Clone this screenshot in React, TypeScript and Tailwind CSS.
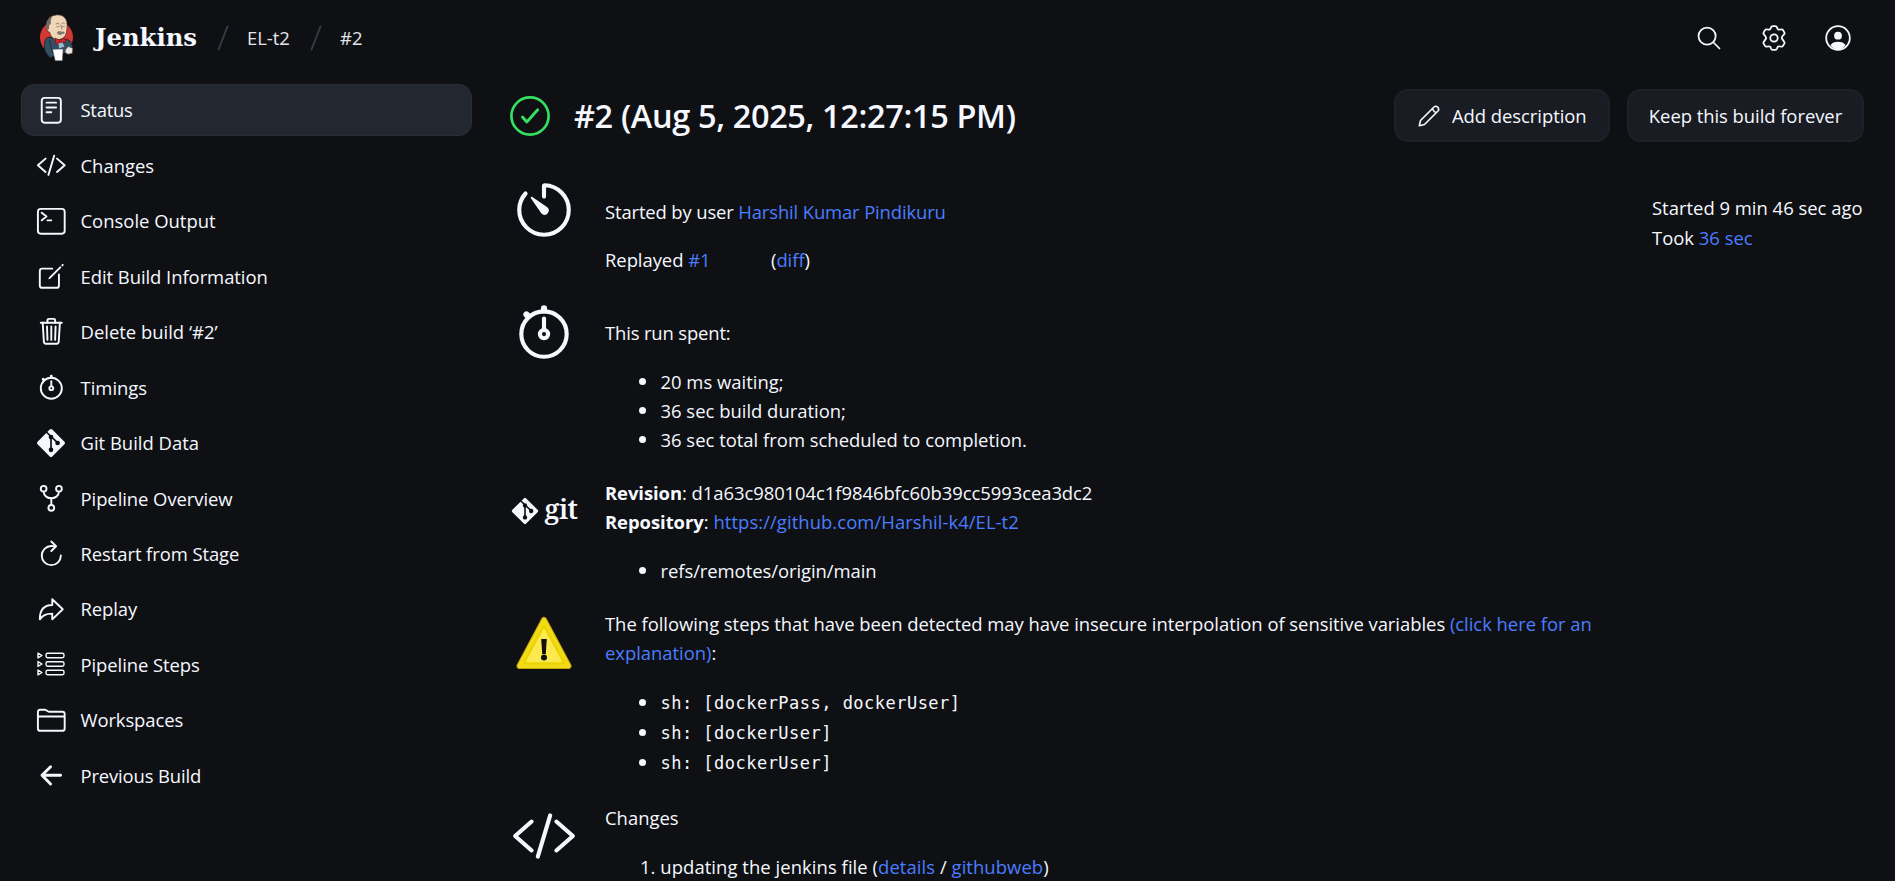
import type { ReactNode } from "react";
import type { IconType } from "react-icons";
import {
  IoArrowBackOutline,
  IoArrowRedoOutline,
  IoCodeSlashOutline,
  IoCreateOutline,
  IoFolderOutline,
  IoGitNetworkOutline,
  IoReaderOutline,
  IoRefreshOutline,
  IoSearchOutline,
  IoStopwatchOutline,
  IoTerminalOutline,
  IoTimerOutline,
  IoTrashOutline,
} from "react-icons/io5";

function JenkinsLogo() {
  return (
    <svg viewBox="24 24 112 144" className="h-12 w-[37px] shrink-0">
      <circle cx="80" cy="94" r="50" fill="#d33833" />
      <path d="M46 138c-4-20-4-38 8-44l22 2 24 4c12 0 20 2 24 10l6 14-14 2-8 14-26 8-22 8z" fill="#335061" stroke="#14202a" strokeWidth="2.5" />
      <path d="M58 102l10 40" stroke="#14202a" strokeWidth="2" fill="none" />
      <path d="M51 64c-2-20 8-36 28-38 20-1 32 9 33 28 0 12 0 24-5 34-5 10-20 16-30 12-9-3-15-10-18-22-5 1-8-5-8-14z" fill="#f0d6b7" stroke="#3b2f28" strokeWidth="2" />
      <path d="M49 66c-3-16 4-32 20-38-6 8-7 16-6 26l-5 2-1 14c-5 1-7 0-8-4z" fill="#70675f" />
      <path d="M78 54q6-5 11 0M96 52q5-4 9 1M80 61q5 3 9 0M97 60q4 3 8 0M93 56l4 14" stroke="#5a473b" strokeWidth="1.8" fill="none" />
      <path d="M81 80c4-7 11-6 14-3 6-2 10 1 10 4-3 4-4 3-8 3-5 5-13 3-16-4z" fill="#80796f" />
      <path d="M76 96l14 7 14-7 5 14-16-2-15 8z" fill="#d8232a" stroke="#5a1111" strokeWidth="1.5" />
      <path d="M86 112l12-2 6 12-16 6z" fill="#9fb9d0" />
      <path d="M68 130l32-1-2 36H76z" fill="#fff" stroke="#33383d" strokeWidth="1.5" />
      <path d="M108 130l8-8 13 5-1 15-13 3-9-5z" fill="#e9e4dc" stroke="#4b4b4b" strokeWidth="1.6" />
    </svg>
  );
}

function SettingsIcon() {
  return (
    <svg viewBox="0 0 28 28" className="size-7" fill="none" stroke="currentColor" strokeWidth="1.8" strokeLinejoin="round">
      <path d="M11 3.600Q11.400 2.200 12.800 2.200h2.400Q16.600 2.200 17 3.600q.700 2.700 3.400 1.900 1.900-.600 2.600.600l1.300 2.300q.700 1.200-.400 2.200-2.600 2.400-2.100 3.400.1.700 2.100 3.400 1.100 1 .4 2.200l-1.300 2.300q-.7 1.200-2.600.6Q17.700 21.700 17 24.400q-.4 1.400-1.800 1.400h-2.400q-1.400 0-1.800-1.400-.700-2.700-3.400-1.900-1.900.600-2.600-.600l-1.300-2.300q-.700-1.200.400-2.200 2-2.700 2.100-3.400 0-1-2.100-3.400-1.100-1-.4-2.200L5 6.100q.7-1.200 2.600-.600Q10.300 6.300 11 3.600z" />
      <circle cx="14" cy="14" r="3.700" />
    </svg>
  );
}

function PersonIcon() {
  return (
    <svg viewBox="0 0 26 26" className="size-[26px]">
      <circle cx="13" cy="13" r="11.800" fill="none" stroke="currentColor" strokeWidth="1.800" />
      <circle cx="13" cy="10.700" r="3.900" fill="currentColor" />
      <path d="M5.500 20.200c1.200-2.400 4.200-3.500 7.500-3.500s6.300 1.100 7.500 3.500C18.800 23 16 24.600 13 24.600S7.200 23 5.500 20.200z" fill="currentColor" />
    </svg>
  );
}

function SuccessIcon() {
  return (
    <svg viewBox="0 0 42 42" className="size-[42px] shrink-0" fill="none" stroke="#35e060" strokeLinecap="round" strokeLinejoin="round">
      <circle cx="21" cy="21" r="18.600" strokeWidth="2.700" />
      <path d="M13.500 22l4.300 5L28.700 14.800" strokeWidth="2.900" />
    </svg>
  );
}

function PencilIcon() {
  return (
    <svg viewBox="0 0 24 24" className="size-6" fill="none" stroke="currentColor" strokeWidth="1.600" strokeLinejoin="round">
      <path d="M2.300 21.700l1.200-5.200L17 3q1.800-1.500 3.800.200Q22.500 5.200 21 7L7.500 20.500z" />
      <path d="M15.300 4.800q1.200 2.700 3.900 3.900" />
    </svg>
  );
}

function GitDiamond({ className }: { className?: string }) {
  return (
    <svg viewBox="0 0 32 32" className={className}>
      <rect x="5.600" y="5.600" width="20.800" height="20.800" rx="1.800" transform="rotate(45 16 16)" fill="currentColor" />
      <g stroke="#0f1014" strokeWidth="1.700" fill="#0f1014">
        <path d="M10.800 4.500L23 16.200M16 10v13" fill="none" />
        <circle cx="16" cy="10" r="1.500" />
        <circle cx="22.600" cy="16" r="1.500" />
        <circle cx="16" cy="22.800" r="1.500" />
      </g>
    </svg>
  );
}

function GitIcon() {
  return <GitDiamond className="size-8" />;
}

function StepsIcon() {
  return (
    <svg viewBox="0 0 30 26" className="h-[26px] w-[30px]" fill="none" stroke="currentColor" strokeWidth="1.400" strokeLinejoin="round">
      {[4.5, 13, 21.5].map((y) => (
        <g key={y}>
          <path d={`M2 ${y - 2.4}v4.8l4-2.4z`} />
          <rect x="10" y={y - 2.2} width="18" height="4.400" rx="1.600" />
        </g>
      ))}
    </svg>
  );
}

function WarningIcon() {
  return (
    <svg viewBox="0 0 58 56" className="mt-1 h-14 w-[58px]">
      <path d="M29 4L53.500 50H4.500z" fill="#e9d200" stroke="#c9a400" strokeWidth="6" strokeLinejoin="round" />
      <path d="M29 4L53.500 50H4.500z" fill="#ecd600" stroke="#f1dc1c" strokeWidth="4" strokeLinejoin="round" />
      <path d="M29 9.500L49.500 47.500H8.500z" fill="#fce94f" stroke="#ecd400" strokeWidth="2.500" strokeLinejoin="round" />
      <path d="M26.200 23h5.600l-1 15h-3.600z" fill="#111" />
      <circle cx="29" cy="41.500" r="3" fill="#111" />
    </svg>
  );
}

const menu: { label: string; icon: IconType | (() => ReactNode); tracking?: string }[] = [
  { label: "Status", icon: IoReaderOutline, tracking: "tracking-[-0.25px]" },
  { label: "Changes", icon: IoCodeSlashOutline },
  { label: "Console Output", icon: IoTerminalOutline },
  { label: "Edit Build Information", icon: IoCreateOutline, tracking: "tracking-[-0.05px]" },
  { label: "Delete build ‘#2’", icon: IoTrashOutline },
  { label: "Timings", icon: IoStopwatchOutline },
  { label: "Git Build Data", icon: GitIcon },
  { label: "Pipeline Overview", icon: IoGitNetworkOutline, tracking: "tracking-[-0.06px]" },
  { label: "Restart from Stage", icon: IoRefreshOutline, tracking: "tracking-[-0.08px]" },
  { label: "Replay", icon: IoArrowRedoOutline, tracking: "tracking-[-0.1px]" },
  { label: "Pipeline Steps", icon: StepsIcon, tracking: "tracking-[-0.08px]" },
  { label: "Workspaces", icon: IoFolderOutline, tracking: "tracking-[-0.1px]" },
  { label: "Previous Build", icon: IoArrowBackOutline, tracking: "tracking-[-0.15px]" },
];

function Slash() {
  return (
    <svg viewBox="0 0 12 26" className="h-[26px] w-3 shrink-0">
      <path d="M10.500 1.500L1.500 24.500" stroke="#353b45" strokeWidth="2" strokeLinecap="round" />
    </svg>
  );
}

function A({ children }: { children: ReactNode }) {
  return (
    <a href="#" className="text-[#4a7dff]">
      {children}
    </a>
  );
}

function Bullet({ children, mono }: { children: ReactNode; mono?: boolean }) {
  return (
    <li className="flex items-start">
      <span className={mono ? "mt-[11.5px] mr-[14.5px] size-[7px] rounded-full bg-[#f5f8ff]" : "mt-[11px] mr-[14.5px] size-[7px] rounded-full bg-[#f5f8ff]"} />
      {mono ? (
        <code className="pt-[1.5px] font-['DejaVu_Sans_Mono',monospace] text-[17px] leading-[28.5px] tracking-[0.48px]">{children}</code>
      ) : (
        <span>{children}</span>
      )}
    </li>
  );
}

function Row({ icon, className, children }: { icon: ReactNode; className: string; children: ReactNode }) {
  return (
    <section className={`flex shrink-0 gap-[26px] ${className}`}>
      <div className="flex h-[66px] w-[70px] shrink-0 items-center justify-center">{icon}</div>
      <div className="w-[1010px]">{children}</div>
    </section>
  );
}

export default function App() {
  return (
    <div className="flex h-screen flex-col overflow-hidden bg-[#0f1014] font-['Open_Sans','Noto_Sans',sans-serif] text-[18.45px] leading-[29px] text-[#f5f8ff]">
      <header className="flex h-[76px] shrink-0 items-center pr-[44px] pb-px pl-[38px]">
        <JenkinsLogo />
        <span className="ml-5 w-[102px] font-['DejaVu_Serif',serif] text-[24.3px] font-bold">Jenkins</span>
        <div className="ml-5 flex items-center gap-[18px] text-[#e2e6ec]">
          <Slash />
          <span className="w-[45px]">EL-t2</span>
          <Slash />
          <span>#2</span>
        </div>
        <div className="ml-auto flex items-center gap-[37px]">
          <IoSearchOutline className="size-[28px]" />
          <SettingsIcon />
          <PersonIcon />
        </div>
      </header>

      <div className="flex min-h-0 grow">
        <nav className="flex w-[472px] shrink-0 flex-col gap-[3.45px] pt-2 pl-[21px]">
          {menu.map(({ label, icon: Icon, tracking }, i) => (
            <a
              key={label}
              href="#"
              className={
                i === 0
                  ? "flex h-[52px] shrink-0 items-center rounded-[13px] border border-[#2a2d35] bg-[#23272f] pl-[13px]"
                  : "flex h-[52px] shrink-0 items-center border border-transparent pl-[13px]"
              }
            >
              <span className="flex w-8 justify-center text-[30.6px]">
                <Icon />
              </span>
              <span className={`ml-[13.5px] ${i === 0 ? "-mt-px" : ""} ${tracking ?? ""}`}>{label}</span>
            </a>
          ))}
        </nav>

        <main className="flex grow flex-col pt-[13px] pr-[31px] pl-[37px]">
          <div className="flex h-[53px] shrink-0 items-center">
            <SuccessIcon />
            <h1 className="ml-[23px] text-[32.5px] leading-[53px] font-semibold tracking-[-0.37px]">
              #2 (Aug 5, 2025, 12:27:15 PM)
            </h1>
            <div className="ml-auto flex gap-[17px]">
              <button className="flex h-[53px] w-[216px] items-center gap-[11px] rounded-[14px] border-2 border-[#1e2127] bg-[#191c23] pl-[21px]">
                <PencilIcon />
                <span className="tracking-[-0.05px]">Add description</span>
              </button>
              <button className="h-[53px] w-[237px] rounded-[14px] border-2 border-[#1e2127] bg-[#191c23] tracking-[-0.05px]">
                Keep this build forever
              </button>
            </div>
          </div>

          <div className="flex min-h-0 justify-between">
            <div className="mt-[35px] flex flex-col">
              <Row icon={<IoTimerOutline className="size-[66px]" />} className="h-[121px]">
                <p className="mt-5 tracking-[-0.14px]">
                  Started by user <A>Harshil Kumar Pindikuru</A>
                </p>
                <p className="mt-[19px] flex tracking-[-0.05px]">
                  <span className="w-[166px]">
                    Replayed <A>#1</A>
                  </span>
                  <span>
                    (<A>diff</A>)
                  </span>
                </p>
              </Row>
              <Row icon={<IoStopwatchOutline className="mt-0.5 size-[66px]" />} className="h-[180px]">
                <p className="mt-5 tracking-[-0.15px]">This run spent:</p>
                <ul className="mt-5 pl-[34px]">
                  <Bullet>20 ms waiting;</Bullet>
                  <Bullet>36 sec build duration;</Bullet>
                  <Bullet>36 sec total from scheduled to completion.</Bullet>
                </ul>
              </Row>
              <Row
                icon={
                  <div className="flex items-center gap-[5px]">
                    <GitDiamond className="size-[30px]" />
                    <span className="-mt-1.5 w-[34px] font-['Noto_Serif','DejaVu_Serif',serif] text-[27px] font-semibold tracking-[-0.5px]">
                      git
                    </span>
                  </div>
                }
                className="h-[131px]"
              >
                <p className="tracking-[-0.06px]">
                  <b>Revision</b>: d1a63c980104c1f9846bfc60b39cc5993cea3dc2
                </p>
                <p className="tracking-[0.06px]">
                  <b className="tracking-[-0.05px]">Repository</b>: <A>https://github.com/Harshil-k4/EL-t2</A>
                </p>
                <ul className="mt-5 pl-[34px] tracking-[-0.06px]">
                  <Bullet>refs/remotes/origin/main</Bullet>
                </ul>
              </Row>
              <Row icon={<WarningIcon />} className="h-[194px]">
                <p className="tracking-[-0.035px]">
                  The following steps that have been detected may have insecure interpolation of sensitive variables{" "}
                  <A>(click here for an explanation)</A>:
                </p>
                <ul className="mt-5 pl-[34px]">
                  <Bullet mono>sh: [dockerPass, dockerUser]</Bullet>
                  <Bullet mono>sh: [dockerUser]</Bullet>
                  <Bullet mono>sh: [dockerUser]</Bullet>
                </ul>
              </Row>
              <Row icon={<IoCodeSlashOutline className="size-[66px]" />} className="h-[100px]">
                <p>Changes</p>
                <p className="mt-5 pl-[35px] tracking-[0.06px]">
                  1. updating the jenkins file (<A>details</A> / <A>githubweb</A>)
                </p>
              </Row>
            </div>
            <div className="mt-[51px] w-[212px] shrink-0 leading-[30px] whitespace-nowrap">
              <p>Started 9 min 46 sec ago</p>
              <p>
                Took <A>36 sec</A>
              </p>
            </div>
          </div>
        </main>
      </div>
    </div>
  );
}
